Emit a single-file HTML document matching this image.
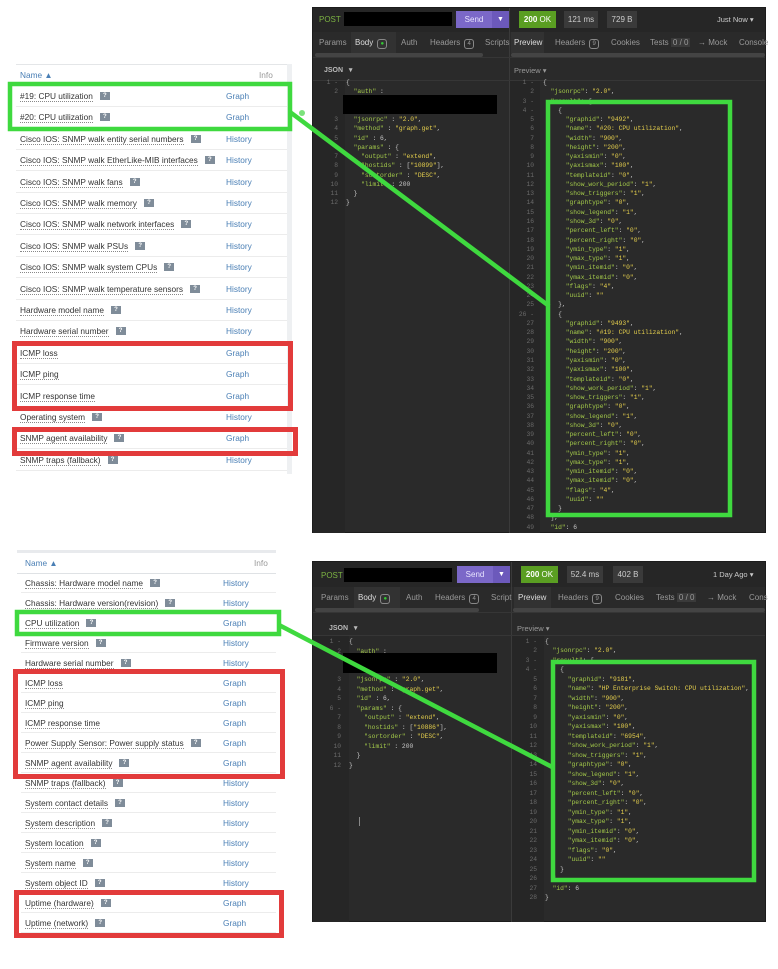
<!DOCTYPE html>
<html><head><meta charset="utf-8">
<style>
*{margin:0;padding:0;box-sizing:border-box}
body{width:778px;height:969px;background:#fff;position:relative;overflow:hidden;font-family:"Liberation Sans",Arial,sans-serif}
.a{position:absolute}
.tbl .r{position:absolute;left:0;height:21px;border-bottom:1px solid #ececec;font-size:8.3px;color:#333}
.r .n{position:absolute;left:4px;top:5px;white-space:nowrap;line-height:10px}
.r .n u{text-decoration:none;border-bottom:1px dotted #888}
.r .q{display:inline-block;width:10px;height:8px;background:#7f8c99;color:#fff;font-size:6px;text-align:center;line-height:8px;font-weight:bold;margin-left:7px;vertical-align:2px}
.r .l{position:absolute;top:6px;color:#4a7fb5;line-height:9px}
.panel{position:absolute;background:#2a2a2a;border:1px solid #1c1c1c;font-family:"Liberation Sans",Arial,sans-serif;color:#bbb;font-size:8px}
pre{position:absolute;font-family:"Liberation Mono",monospace;font-size:6.3px;margin:0;white-space:pre}
.num{color:#6a6a6a;text-align:right}
.k{color:#a3c94a}.s{color:#e5cf4d}.p{color:#c8c8c8}
.tab{position:absolute;top:0;height:21px;line-height:21px;font-size:8px;color:#999}
.badge{display:inline-block;border:1px solid #888;border-radius:3px;font-size:6px;padding:0 2px;line-height:8px;margin-left:2px}
</style></head><body>

<!-- ===== TOP TABLE ===== -->
<div class="a" style="left:16px;top:64px;width:271px;height:1px;background:#e4e6e8"></div>
<div class="a" style="left:287px;top:64px;width:5px;height:410px;background:#eef0f2"></div>
<div class="a" style="left:20px;top:70px;font-size:8.3px;color:#4a7fb5">Name ▲</div>
<div class="a" style="left:259px;top:70px;font-size:8.3px;color:#999">Info</div>
<div class="a" style="left:16px;top:85px;width:271px;height:1px;background:#e0e0e0"></div>
<div class="tbl a" style="left:16px;top:86px;width:271px">
<div class="r" style="top:0;width:271px"><span class="n"><u>#19: CPU utilization</u><span class="q">?</span></span><span class="l" style="left:210px">Graph</span></div>
<div class="r" style="top:21.4px;width:271px"><span class="n"><u>#20: CPU utilization</u><span class="q">?</span></span><span class="l" style="left:210px">Graph</span></div>
<div class="r" style="top:42.8px;width:271px"><span class="n"><u>Cisco IOS: SNMP walk entity serial numbers</u><span class="q">?</span></span><span class="l" style="left:210px">History</span></div>
<div class="r" style="top:64.2px;width:271px"><span class="n"><u>Cisco IOS: SNMP walk EtherLike-MIB interfaces</u><span class="q">?</span></span><span class="l" style="left:210px">History</span></div>
<div class="r" style="top:85.6px;width:271px"><span class="n"><u>Cisco IOS: SNMP walk fans</u><span class="q">?</span></span><span class="l" style="left:210px">History</span></div>
<div class="r" style="top:107px;width:271px"><span class="n"><u>Cisco IOS: SNMP walk memory</u><span class="q">?</span></span><span class="l" style="left:210px">History</span></div>
<div class="r" style="top:128.4px;width:271px"><span class="n"><u>Cisco IOS: SNMP walk network interfaces</u><span class="q">?</span></span><span class="l" style="left:210px">History</span></div>
<div class="r" style="top:149.8px;width:271px"><span class="n"><u>Cisco IOS: SNMP walk PSUs</u><span class="q">?</span></span><span class="l" style="left:210px">History</span></div>
<div class="r" style="top:171.2px;width:271px"><span class="n"><u>Cisco IOS: SNMP walk system CPUs</u><span class="q">?</span></span><span class="l" style="left:210px">History</span></div>
<div class="r" style="top:192.6px;width:271px"><span class="n"><u>Cisco IOS: SNMP walk temperature sensors</u><span class="q">?</span></span><span class="l" style="left:210px">History</span></div>
<div class="r" style="top:214px;width:271px"><span class="n"><u>Hardware model name</u><span class="q">?</span></span><span class="l" style="left:210px">History</span></div>
<div class="r" style="top:235.4px;width:271px"><span class="n"><u>Hardware serial number</u><span class="q">?</span></span><span class="l" style="left:210px">History</span></div>
<div class="r" style="top:256.8px;width:271px"><span class="n"><u>ICMP loss</u></span><span class="l" style="left:210px">Graph</span></div>
<div class="r" style="top:278.2px;width:271px"><span class="n"><u>ICMP ping</u></span><span class="l" style="left:210px">Graph</span></div>
<div class="r" style="top:299.6px;width:271px"><span class="n"><u>ICMP response time</u></span><span class="l" style="left:210px">Graph</span></div>
<div class="r" style="top:321px;width:271px"><span class="n"><u>Operating system</u><span class="q">?</span></span><span class="l" style="left:210px">History</span></div>
<div class="r" style="top:342.4px;width:271px"><span class="n"><u>SNMP agent availability</u><span class="q">?</span></span><span class="l" style="left:210px">Graph</span></div>
<div class="r" style="top:363.8px;width:271px"><span class="n"><u>SNMP traps (fallback)</u><span class="q">?</span></span><span class="l" style="left:210px">History</span></div>
</div>

<!-- ===== BOTTOM TABLE ===== -->
<div class="a" style="left:17px;top:550px;width:259px;height:3px;background:#e8eaed"></div>
<div class="a" style="left:25px;top:558px;font-size:8.3px;color:#4a7fb5">Name ▲</div>
<div class="a" style="left:254px;top:558px;font-size:8.3px;color:#999">Info</div>
<div class="a" style="left:17px;top:573px;width:259px;height:1px;background:#dfe2e5"></div>
<div class="tbl a" style="left:21px;top:573px;width:255px">
<div class="r" style="top:0;width:255px;height:20px"><span class="n"><u>Chassis: Hardware model name</u><span class="q">?</span></span><span class="l" style="left:202px">History</span></div>
<div class="r" style="top:20px;width:255px;height:20px"><span class="n"><u>Chassis: Hardware version(revision)</u><span class="q">?</span></span><span class="l" style="left:202px">History</span></div>
<div class="r" style="top:40px;width:255px;height:20px"><span class="n"><u>CPU utilization</u><span class="q">?</span></span><span class="l" style="left:202px">Graph</span></div>
<div class="r" style="top:60px;width:255px;height:20px"><span class="n"><u>Firmware version</u><span class="q">?</span></span><span class="l" style="left:202px">History</span></div>
<div class="r" style="top:80px;width:255px;height:20px"><span class="n"><u>Hardware serial number</u><span class="q">?</span></span><span class="l" style="left:202px">History</span></div>
<div class="r" style="top:100px;width:255px;height:20px"><span class="n"><u>ICMP loss</u></span><span class="l" style="left:202px">Graph</span></div>
<div class="r" style="top:120px;width:255px;height:20px"><span class="n"><u>ICMP ping</u></span><span class="l" style="left:202px">Graph</span></div>
<div class="r" style="top:140px;width:255px;height:20px"><span class="n"><u>ICMP response time</u></span><span class="l" style="left:202px">Graph</span></div>
<div class="r" style="top:160px;width:255px;height:20px"><span class="n"><u>Power Supply Sensor: Power supply status</u><span class="q">?</span></span><span class="l" style="left:202px">Graph</span></div>
<div class="r" style="top:180px;width:255px;height:20px"><span class="n"><u>SNMP agent availability</u><span class="q">?</span></span><span class="l" style="left:202px">Graph</span></div>
<div class="r" style="top:200px;width:255px;height:20px"><span class="n"><u>SNMP traps (fallback)</u><span class="q">?</span></span><span class="l" style="left:202px">History</span></div>
<div class="r" style="top:220px;width:255px;height:20px"><span class="n"><u>System contact details</u><span class="q">?</span></span><span class="l" style="left:202px">History</span></div>
<div class="r" style="top:240px;width:255px;height:20px"><span class="n"><u>System description</u><span class="q">?</span></span><span class="l" style="left:202px">History</span></div>
<div class="r" style="top:260px;width:255px;height:20px"><span class="n"><u>System location</u><span class="q">?</span></span><span class="l" style="left:202px">History</span></div>
<div class="r" style="top:280px;width:255px;height:20px"><span class="n"><u>System name</u><span class="q">?</span></span><span class="l" style="left:202px">History</span></div>
<div class="r" style="top:300px;width:255px;height:20px"><span class="n"><u>System object ID</u><span class="q">?</span></span><span class="l" style="left:202px">History</span></div>
<div class="r" style="top:320px;width:255px;height:20px"><span class="n"><u>Uptime (hardware)</u><span class="q">?</span></span><span class="l" style="left:202px">Graph</span></div>
<div class="r" style="top:340px;width:255px;height:20px"><span class="n"><u>Uptime (network)</u><span class="q">?</span></span><span class="l" style="left:202px">Graph</span></div>
</div>

<!-- ===== TOP PANEL ===== -->
<div class="panel" style="left:312px;top:7px;width:454px;height:526px">
  <div class="a" style="left:0;top:0;width:452px;height:24px;background:#262626"></div>
  <div class="a" style="left:6px;top:7px;color:#7cb342;font-size:8px">POST</div>
  <div class="a" style="left:31px;top:4px;width:108px;height:14px;background:#000"></div>
  <div class="a" style="left:143px;top:3px;width:36px;height:17px;background:#7b68c8;color:#e8e4ff;font-size:8px;text-align:center;line-height:17px">Send</div>
  <div class="a" style="left:179px;top:3px;width:17px;height:17px;background:#6c59bb;color:#fff;font-size:7px;text-align:center;line-height:17px">▼</div>
  <div class="a" style="left:196px;top:0;width:1px;height:525px;background:#3a3a3a"></div>
  <div class="a" style="left:206px;top:3px;width:37px;height:17px;background:#5a9e22;color:#fff;font-size:8px;text-align:center;line-height:17px"><b>200</b> OK</div>
  <div class="a" style="left:251px;top:3px;width:34px;height:17px;background:#3a3a3a;color:#ccc;font-size:8px;text-align:center;line-height:17px">121 ms</div>
  <div class="a" style="left:294px;top:3px;width:30px;height:17px;background:#3a3a3a;color:#ccc;font-size:8px;text-align:center;line-height:17px">729 B</div>
  <div class="a" style="left:404px;top:7px;color:#ccc;font-size:7.5px">Just Now ▾</div>
  <div class="a" style="left:0;top:24px;width:452px;height:21px">
    <div class="tab" style="left:6px">Params</div>
    <div class="tab" style="left:38px;width:45px;background:#323232;color:#ddd;padding-left:4px">Body <span class="badge" style="color:#3c3">●</span></div>
    <div class="tab" style="left:88px">Auth</div>
    <div class="tab" style="left:117px">Headers <span class="badge">4</span></div>
    <div class="tab" style="left:172px">Scripts</div>
    <div class="tab" style="left:198px;width:33px;background:#323232;color:#ddd;padding-left:3px">Preview</div>
    <div class="tab" style="left:242px">Headers <span class="badge">9</span></div>
    <div class="tab" style="left:298px">Cookies</div>
    <div class="tab" style="left:337px">Tests <span style="background:#3a3a3a;padding:0 2px">0 / 0</span></div>
    <div class="tab" style="left:385px">→ Mock</div>
    <div class="tab" style="left:426px">Console</div>
  </div>
  <div class="a" style="left:2px;top:45px;width:168px;height:4px;background:#444;border-radius:2px"></div>
  <div class="a" style="left:198px;top:45px;width:254px;height:4px;background:#444;border-radius:2px"></div>
  <div class="a" style="left:0;top:49px;width:452px;height:1px;background:#363636"></div>
  <div class="a" style="left:11px;top:58px;font-size:7px;color:#bbb;font-weight:bold">JSON &nbsp;&nbsp;▾</div>
  <div class="a" style="left:201px;top:58px;font-size:7.5px;color:#999">Preview ▾</div>
  <div class="a" style="left:0;top:72px;width:452px;height:1px;background:#363636"></div>
  <div class="a" style="left:0;top:73px;width:32px;height:452px;background:#262626"></div>
  <div class="a" style="left:197px;top:73px;width:30px;height:452px;background:#262626"></div>
</div>
<pre class="num" style="left:318px;top:78px;width:20px;line-height:9.27px">1 -
2


3
4
5
6
7
8
9
10
11
12</pre>
<pre style="left:346px;top:78px;line-height:9.27px"><span class="p">{</span>
  <span class="k">"auth"</span> <span class="p">:</span>


  <span class="k">"jsonrpc"</span> <span class="p">:</span> <span class="s">"2.0"</span><span class="p">,</span>
  <span class="k">"method"</span> <span class="p">:</span> <span class="s">"graph.get"</span><span class="p">,</span>
  <span class="k">"id"</span> <span class="p">: 6,</span>
  <span class="k">"params"</span> <span class="p">: {</span>
    <span class="k">"output"</span> <span class="p">:</span> <span class="s">"extend"</span><span class="p">,</span>
    <span class="k">"hostids"</span> <span class="p">: [</span><span class="s">"10899"</span><span class="p">],</span>
    <span class="k">"sortorder"</span> <span class="p">:</span> <span class="s">"DESC"</span><span class="p">,</span>
    <span class="k">"limit"</span> <span class="p">: 200</span>
  <span class="p">}</span>
<span class="p">}</span></pre>
<div class="a" style="left:343px;top:95px;width:154px;height:19px;background:#000"></div>

<pre class="num" style="left:512px;top:78px;width:22px;line-height:9.27px">1 -
2
3 -
4 -
5
6
7
8
9
10
11
12
13
14
15
16
17
18
19
20
21
22
23
24
25
26 -
27
28
29
30
31
32
33
34
35
36
37
38
39
40
41
42
43
44
45
46
47
48
49</pre>
<pre style="left:543px;top:78px;line-height:9.27px"><span class="p">{</span>
  <span class="k">"jsonrpc"</span><span class="p">:</span> <span class="s">"2.0"</span><span class="p">,</span>
  <span class="k">"result"</span><span class="p">: [</span>
    <span class="p">{</span>
      <span class="k">"graphid"</span><span class="p">:</span> <span class="s">"9492"</span><span class="p">,</span>
      <span class="k">"name"</span><span class="p">:</span> <span class="s">"#20: CPU utilization"</span><span class="p">,</span>
      <span class="k">"width"</span><span class="p">:</span> <span class="s">"900"</span><span class="p">,</span>
      <span class="k">"height"</span><span class="p">:</span> <span class="s">"200"</span><span class="p">,</span>
      <span class="k">"yaxismin"</span><span class="p">:</span> <span class="s">"0"</span><span class="p">,</span>
      <span class="k">"yaxismax"</span><span class="p">:</span> <span class="s">"100"</span><span class="p">,</span>
      <span class="k">"templateid"</span><span class="p">:</span> <span class="s">"0"</span><span class="p">,</span>
      <span class="k">"show_work_period"</span><span class="p">:</span> <span class="s">"1"</span><span class="p">,</span>
      <span class="k">"show_triggers"</span><span class="p">:</span> <span class="s">"1"</span><span class="p">,</span>
      <span class="k">"graphtype"</span><span class="p">:</span> <span class="s">"0"</span><span class="p">,</span>
      <span class="k">"show_legend"</span><span class="p">:</span> <span class="s">"1"</span><span class="p">,</span>
      <span class="k">"show_3d"</span><span class="p">:</span> <span class="s">"0"</span><span class="p">,</span>
      <span class="k">"percent_left"</span><span class="p">:</span> <span class="s">"0"</span><span class="p">,</span>
      <span class="k">"percent_right"</span><span class="p">:</span> <span class="s">"0"</span><span class="p">,</span>
      <span class="k">"ymin_type"</span><span class="p">:</span> <span class="s">"1"</span><span class="p">,</span>
      <span class="k">"ymax_type"</span><span class="p">:</span> <span class="s">"1"</span><span class="p">,</span>
      <span class="k">"ymin_itemid"</span><span class="p">:</span> <span class="s">"0"</span><span class="p">,</span>
      <span class="k">"ymax_itemid"</span><span class="p">:</span> <span class="s">"0"</span><span class="p">,</span>
      <span class="k">"flags"</span><span class="p">:</span> <span class="s">"4"</span><span class="p">,</span>
      <span class="k">"uuid"</span><span class="p">:</span> <span class="s">""</span>
    <span class="p">},</span>
    <span class="p">{</span>
      <span class="k">"graphid"</span><span class="p">:</span> <span class="s">"9493"</span><span class="p">,</span>
      <span class="k">"name"</span><span class="p">:</span> <span class="s">"#19: CPU utilization"</span><span class="p">,</span>
      <span class="k">"width"</span><span class="p">:</span> <span class="s">"900"</span><span class="p">,</span>
      <span class="k">"height"</span><span class="p">:</span> <span class="s">"200"</span><span class="p">,</span>
      <span class="k">"yaxismin"</span><span class="p">:</span> <span class="s">"0"</span><span class="p">,</span>
      <span class="k">"yaxismax"</span><span class="p">:</span> <span class="s">"100"</span><span class="p">,</span>
      <span class="k">"templateid"</span><span class="p">:</span> <span class="s">"0"</span><span class="p">,</span>
      <span class="k">"show_work_period"</span><span class="p">:</span> <span class="s">"1"</span><span class="p">,</span>
      <span class="k">"show_triggers"</span><span class="p">:</span> <span class="s">"1"</span><span class="p">,</span>
      <span class="k">"graphtype"</span><span class="p">:</span> <span class="s">"0"</span><span class="p">,</span>
      <span class="k">"show_legend"</span><span class="p">:</span> <span class="s">"1"</span><span class="p">,</span>
      <span class="k">"show_3d"</span><span class="p">:</span> <span class="s">"0"</span><span class="p">,</span>
      <span class="k">"percent_left"</span><span class="p">:</span> <span class="s">"0"</span><span class="p">,</span>
      <span class="k">"percent_right"</span><span class="p">:</span> <span class="s">"0"</span><span class="p">,</span>
      <span class="k">"ymin_type"</span><span class="p">:</span> <span class="s">"1"</span><span class="p">,</span>
      <span class="k">"ymax_type"</span><span class="p">:</span> <span class="s">"1"</span><span class="p">,</span>
      <span class="k">"ymin_itemid"</span><span class="p">:</span> <span class="s">"0"</span><span class="p">,</span>
      <span class="k">"ymax_itemid"</span><span class="p">:</span> <span class="s">"0"</span><span class="p">,</span>
      <span class="k">"flags"</span><span class="p">:</span> <span class="s">"4"</span><span class="p">,</span>
      <span class="k">"uuid"</span><span class="p">:</span> <span class="s">""</span>
    <span class="p">}</span>
  <span class="p">],</span>
  <span class="k">"id"</span><span class="p">: 6</span></pre>

<!-- ===== BOTTOM PANEL ===== -->
<div class="panel" style="left:312px;top:561px;width:454px;height:361px">
  <div class="a" style="left:0;top:0;width:452px;height:25px;background:#262626"></div>
  <div class="a" style="left:8px;top:9px;color:#7cb342;font-size:8px">POST</div>
  <div class="a" style="left:31px;top:6px;width:108px;height:14px;background:#000"></div>
  <div class="a" style="left:144px;top:4px;width:36px;height:17px;background:#7b68c8;color:#e8e4ff;font-size:8px;text-align:center;line-height:17px">Send</div>
  <div class="a" style="left:180px;top:4px;width:17px;height:17px;background:#6c59bb;color:#fff;font-size:7px;text-align:center;line-height:17px">▼</div>
  <div class="a" style="left:198px;top:0;width:1px;height:360px;background:#3a3a3a"></div>
  <div class="a" style="left:208px;top:4px;width:37px;height:17px;background:#5a9e22;color:#fff;font-size:8px;text-align:center;line-height:17px"><b>200</b> OK</div>
  <div class="a" style="left:254px;top:4px;width:36px;height:17px;background:#3a3a3a;color:#ccc;font-size:8px;text-align:center;line-height:17px">52.4 ms</div>
  <div class="a" style="left:300px;top:4px;width:30px;height:17px;background:#3a3a3a;color:#ccc;font-size:8px;text-align:center;line-height:17px">402 B</div>
  <div class="a" style="left:400px;top:8px;color:#ccc;font-size:7.5px">1 Day Ago ▾</div>
  <div class="a" style="left:0;top:25px;width:452px;height:21px">
    <div class="tab" style="left:8px">Params</div>
    <div class="tab" style="left:41px;width:46px;background:#323232;color:#ddd;padding-left:4px">Body <span class="badge" style="color:#3c3">●</span></div>
    <div class="tab" style="left:93px">Auth</div>
    <div class="tab" style="left:122px">Headers <span class="badge">4</span></div>
    <div class="tab" style="left:178px">Script</div>
    <div class="tab" style="left:201px;width:37px;background:#323232;color:#ddd;padding-left:4px">Preview</div>
    <div class="tab" style="left:245px">Headers <span class="badge">9</span></div>
    <div class="tab" style="left:302px">Cookies</div>
    <div class="tab" style="left:343px">Tests <span style="background:#3a3a3a;padding:0 2px">0 / 0</span></div>
    <div class="tab" style="left:394px">→ Mock</div>
    <div class="tab" style="left:436px">Cons</div>
  </div>
  <div class="a" style="left:2px;top:46px;width:164px;height:4px;background:#444;border-radius:2px"></div>
  <div class="a" style="left:200px;top:46px;width:252px;height:4px;background:#444;border-radius:2px"></div>
  <div class="a" style="left:0;top:50px;width:452px;height:1px;background:#363636"></div>
  <div class="a" style="left:16px;top:62px;font-size:7px;color:#bbb;font-weight:bold">JSON &nbsp;&nbsp;▾</div>
  <div class="a" style="left:204px;top:62px;font-size:7.5px;color:#999">Preview ▾</div>
  <div class="a" style="left:0;top:73px;width:452px;height:1px;background:#363636"></div>
  <div class="a" style="left:0;top:74px;width:36px;height:286px;background:#262626"></div>
  <div class="a" style="left:199px;top:74px;width:32px;height:286px;background:#262626"></div>
  <div class="a" style="left:46px;top:255px;width:1px;height:9px;background:#888"></div>
</div>
<pre class="num" style="left:318px;top:637px;width:23px;line-height:9.5px">1 -
2


3
4
5
6 -
7
8
9
10
11
12</pre>
<pre style="left:349px;top:637px;line-height:9.5px"><span class="p">{</span>
  <span class="k">"auth"</span> <span class="p">:</span>


  <span class="k">"jsonrpc"</span> <span class="p">:</span> <span class="s">"2.0"</span><span class="p">,</span>
  <span class="k">"method"</span> <span class="p">:</span> <span class="s">"graph.get"</span><span class="p">,</span>
  <span class="k">"id"</span> <span class="p">: 6,</span>
  <span class="k">"params"</span> <span class="p">: {</span>
    <span class="k">"output"</span> <span class="p">:</span> <span class="s">"extend"</span><span class="p">,</span>
    <span class="k">"hostids"</span> <span class="p">: [</span><span class="s">"10886"</span><span class="p">],</span>
    <span class="k">"sortorder"</span> <span class="p">:</span> <span class="s">"DESC"</span><span class="p">,</span>
    <span class="k">"limit"</span> <span class="p">: 200</span>
  <span class="p">}</span>
<span class="p">}</span></pre>
<div class="a" style="left:343px;top:653px;width:154px;height:20px;background:#000"></div>

<pre class="num" style="left:515px;top:637px;width:22px;line-height:9.48px">1 -
2
3 -
4 -
5
6
7
8
9
10
11
12
13
14
15
16
17
18
19
20
21
22
23
24
25
26
27
28</pre>
<pre style="left:545px;top:637px;line-height:9.48px"><span class="p">{</span>
  <span class="k">"jsonrpc"</span><span class="p">:</span> <span class="s">"2.0"</span><span class="p">,</span>
  <span class="k">"result"</span><span class="p">: [</span>
    <span class="p">{</span>
      <span class="k">"graphid"</span><span class="p">:</span> <span class="s">"9181"</span><span class="p">,</span>
      <span class="k">"name"</span><span class="p">:</span> <span class="s">"HP Enterprise Switch: CPU utilization"</span><span class="p">,</span>
      <span class="k">"width"</span><span class="p">:</span> <span class="s">"900"</span><span class="p">,</span>
      <span class="k">"height"</span><span class="p">:</span> <span class="s">"200"</span><span class="p">,</span>
      <span class="k">"yaxismin"</span><span class="p">:</span> <span class="s">"0"</span><span class="p">,</span>
      <span class="k">"yaxismax"</span><span class="p">:</span> <span class="s">"100"</span><span class="p">,</span>
      <span class="k">"templateid"</span><span class="p">:</span> <span class="s">"6954"</span><span class="p">,</span>
      <span class="k">"show_work_period"</span><span class="p">:</span> <span class="s">"1"</span><span class="p">,</span>
      <span class="k">"show_triggers"</span><span class="p">:</span> <span class="s">"1"</span><span class="p">,</span>
      <span class="k">"graphtype"</span><span class="p">:</span> <span class="s">"0"</span><span class="p">,</span>
      <span class="k">"show_legend"</span><span class="p">:</span> <span class="s">"1"</span><span class="p">,</span>
      <span class="k">"show_3d"</span><span class="p">:</span> <span class="s">"0"</span><span class="p">,</span>
      <span class="k">"percent_left"</span><span class="p">:</span> <span class="s">"0"</span><span class="p">,</span>
      <span class="k">"percent_right"</span><span class="p">:</span> <span class="s">"0"</span><span class="p">,</span>
      <span class="k">"ymin_type"</span><span class="p">:</span> <span class="s">"1"</span><span class="p">,</span>
      <span class="k">"ymax_type"</span><span class="p">:</span> <span class="s">"1"</span><span class="p">,</span>
      <span class="k">"ymin_itemid"</span><span class="p">:</span> <span class="s">"0"</span><span class="p">,</span>
      <span class="k">"ymax_itemid"</span><span class="p">:</span> <span class="s">"0"</span><span class="p">,</span>
      <span class="k">"flags"</span><span class="p">:</span> <span class="s">"0"</span><span class="p">,</span>
      <span class="k">"uuid"</span><span class="p">:</span> <span class="s">""</span>
    <span class="p">}</span>
  <span class="p">],</span>
  <span class="k">"id"</span><span class="p">: 6</span>
<span class="p">}</span></pre>

<!-- ===== ANNOTATIONS ===== -->
<svg class="a" style="left:0;top:0" width="778" height="969">
  <g fill="none" stroke="#3fd93f" stroke-width="4.5">
    <rect x="10" y="84" width="280" height="45"/>
    <rect x="548" y="102" width="182" height="413"/>
    <line x1="290" y1="112" x2="549" y2="306"/>
    <rect x="17" y="612" width="262" height="22"/>
    <rect x="553" y="662" width="201" height="218"/>
    <line x1="279" y1="625" x2="554" y2="768"/>
  </g>
  <circle cx="302" cy="113" r="3" fill="#7ce27c"/>
  <g fill="none" stroke="#e23b3b" stroke-width="5">
    <rect x="14.5" y="343.5" width="276" height="65"/>
    <rect x="14.5" y="429.5" width="281" height="24"/>
    <rect x="15.5" y="671.5" width="267" height="105"/>
    <rect x="16.5" y="892.5" width="265" height="43"/>
  </g>
</svg>
</body></html>
